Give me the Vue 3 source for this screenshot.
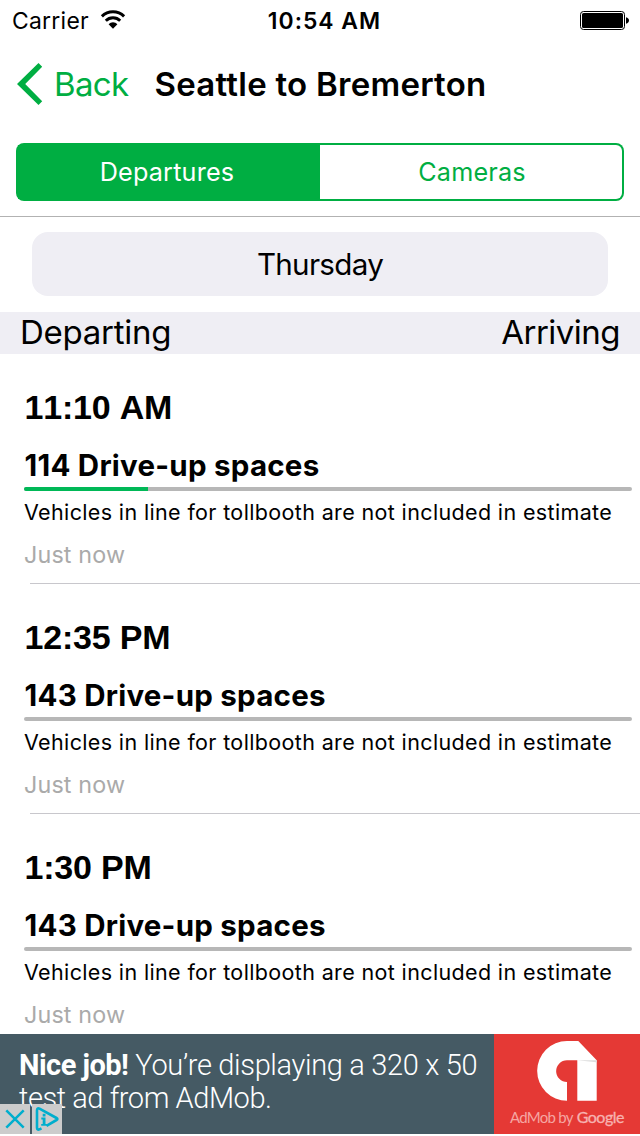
<script setup>
import { ref } from 'vue'

const tabs = ['Departures', 'Cameras']
const active = ref(0)

const sailings = [
  { time: '11:10 AM', spaces: 114, filled: 20.4 },
  { time: '12:35 PM', spaces: 143, filled: 0 },
  { time: '1:30 PM', spaces: 143, filled: 0 },
]
</script>

<template>
  <main class="screen">
    <header class="status">
      <div class="carrier">
        <span>Carrier</span>
        <svg class="wifi" viewBox="0 0 26 20" width="26" height="20">
          <path d="M1.900 6.400a15.800 15.800 0 0 1 22.200 0" fill="none" stroke="#000" stroke-width="3" />
          <path d="M5.800 10.700a10.200 10.200 0 0 1 14.400 0" fill="none" stroke="#000" stroke-width="2.900" />
          <path d="M8.600 14.200a6.200 6.200 0 0 1 8.800 0L13 18.700z" />
        </svg>
      </div>
      <span class="clock">10:54 AM</span>
      <svg class="battery" viewBox="0 0 50 20" width="50" height="20">
        <rect x="0.5" y="0.5" width="44" height="18" rx="3" fill="none" stroke="#000" />
        <rect x="2" y="2" width="41" height="15" rx="1.6" />
        <path d="M46 6.300c1.800.4 3 1.600 3 3.200s-1.200 2.800-3 3.200z" />
      </svg>
    </header>

    <nav class="bar">
      <a class="back">
        <svg viewBox="0 0 27 42" width="27" height="42">
          <path d="M22.500 0L26.200 3.800 9.200 21l17 17.200-3.700 3.800L1 21z" fill="#00ae42" />
        </svg>
        <span>Back</span>
      </a>
      <h1>Seattle to Bremerton</h1>
    </nav>

    <div class="segments">
      <button v-for="(tab, i) in tabs" :key="tab" :class="{ on: i === active }" @click="active = i">{{ tab }}</button>
    </div>

    <div class="day">Thursday</div>

    <div class="columns">
      <span class="departing">Departing</span>
      <span class="arriving">Arriving</span>
    </div>

    <ul class="list">
      <li v-for="s in sailings" :key="s.time">
        <div class="time">{{ s.time }}</div>
        <div class="spaces">{{ s.spaces }} Drive-up spaces</div>
        <div class="track"><div class="fill" :style="{ width: s.filled + '%' }"></div></div>
        <div class="note">Vehicles in line for tollbooth are not included in estimate</div>
        <div class="updated">Just now</div>
      </li>
    </ul>

    <aside class="ad">
      <div class="copy">
        <div class="line one"><b>Nice job!</b><span>You’re displaying a 320 x 50</span></div>
        <div class="line two">test ad from AdMob.</div>
      </div>
      <div class="brand">
        <svg viewBox="0 0 60 60" width="60" height="60">
          <path d="M30 0H41.300L59.700 19.300V59.700H40.300V19.300H30A10.850 10.850 0 0 0 30 41V59.700A29.850 29.850 0 0 1 30 0z" fill="#fff" />
          <path d="M40.300 19.300H59.700V21.600L57 21Z" fill="#ddd" />
        </svg>
        <div class="by"><span>AdMob by</span><b>Google</b></div>
      </div>
      <div class="choices">
        <svg viewBox="0 0 30 30" width="30" height="30">
          <path d="M6.300 6.300l17.400 17.400M23.700 6.300l-17.400 17.400" stroke="#00aecd" stroke-width="2.500" fill="none" />
        </svg>
        <svg viewBox="0 0 30 30" width="30" height="30">
          <path d="M9.500 24.300l-2 1q-2.500 1-2.500-1.500V6.500q0-3 2.500-1.800L24.500 14q1.800 1 0 2L14.500 21.800" stroke="#00aecd" stroke-width="2.600" fill="none" />
          <path d="M10.700 9.800h2.800v2.600h-2.800zM9.300 13.600h4.200v6.400h1.400v1.800H9.200v-1.800h1.500v-4.600H9.300z" fill="#00aecd" />
        </svg>
      </div>
    </aside>
  </main>
</template>

<style>
body {
  background: #fff;
}
</style>

<style scoped>
.screen {
  width: 640px;
  height: 1136px;
  overflow: hidden;
  background: #fff;
  color: #000;
  font-family: Inter, "Liberation Sans", sans-serif;
  white-space: nowrap;
}
.status {
  display: grid;
  grid-template-columns: 1fr auto 1fr;
  height: 40px;
  box-sizing: border-box;
  padding: 0 10px 0 12px;
  line-height: 42px;
  font-size: 22.9px;
}
.carrier {
  display: flex;
  letter-spacing: 0.27px;
}
.wifi {
  margin: 10px 0 0 11px;
}
.clock {
  padding-left: 7px;
  font-weight: 600;
  letter-spacing: 1px;
}
.battery {
  justify-self: end;
  margin-top: 11px;
}
.bar {
  display: flex;
  align-items: center;
  height: 88px;
  padding-left: 16px;
}
.back {
  display: flex;
  align-items: center;
  width: 138.5px;
  color: #00ae42;
  font-size: 33px;
  letter-spacing: -0.67px;
}
.back span {
  margin-left: 11px;
}
h1 {
  margin: 0;
  font-size: 33px;
  font-weight: 600;
  letter-spacing: 0.25px;
}
.segments {
  display: grid;
  grid-template-columns: 1fr 1fr;
  height: 54px;
  margin: 15px 16px;
  padding: 2px;
  border-radius: 8px;
  background: #00ae42;
}
.segments button {
  padding: 0 0 0 2px;
  border: 0;
  border-radius: 0 6px 6px 0;
  background: #fff;
  color: #00ae42;
  font: 400 25.2px/54px Inter, sans-serif;
  letter-spacing: 0.2px;
}
.segments .on {
  padding: 0 4px 0 0;
  background: #00ae42;
  color: #fff;
}
.day {
  position: relative;
  height: 64px;
  margin: 31px 32px 16px;
  border-radius: 16px;
  background: #efeef4;
  text-align: center;
  font-size: 29.6px;
  line-height: 65px;
  letter-spacing: -0.7px;
}
.day::before {
  content: "";
  position: absolute;
  left: -32px;
  right: -32px;
  top: -16px;
  height: 1px;
  background: #b2b2b2;
}
.columns {
  display: flex;
  justify-content: space-between;
  height: 42px;
  padding: 0 20px;
  background: #efeef4;
  font-size: 33px;
  line-height: 40px;
}
.departing {
  letter-spacing: -0.25px;
}
.arriving {
  letter-spacing: -0.53px;
}
.list {
  height: 680px;
  margin: 0;
  padding: 0;
  overflow: hidden;
  list-style: none;
}
li {
  position: relative;
  height: 197px;
  padding: 33px 8px 0 24px;
}
li::after {
  content: "";
  position: absolute;
  left: 30px;
  right: 0;
  bottom: 0;
  height: 1px;
  background: #c8c7cc;
}
.time {
  padding-left: 0.5px;
  font: 700 34px/40px "Liberation Sans", Arial, sans-serif;
  font-kerning: none;
  letter-spacing: -0.2px;
}
.spaces {
  margin-top: 18px;
  padding-left: 0.5px;
  font-size: 29.5px;
  font-weight: 700;
  line-height: 40px;
  letter-spacing: 0.24px;
}
.track {
  height: 4px;
  margin-top: 2px;
  border-radius: 2px;
  overflow: hidden;
  background: #b7b7b7;
}
.fill {
  height: 100%;
  background: #00b857;
}
.note {
  margin-top: 6px;
  font-size: 21.5px;
  line-height: 30px;
  letter-spacing: 0.36px;
}
.updated {
  margin-top: 13px;
  color: #aaa;
  font-size: 23.3px;
  line-height: 30px;
  letter-spacing: 0.16px;
}
.ad {
  position: relative;
  display: flex;
  height: 100px;
  background: #455a64;
  color: #fff;
}
.copy {
  flex: 1;
  padding: 15px 0 0 19px;
  font: 300 29px/33px Roboto, sans-serif;
}
.one {
  display: flex;
  gap: 7px;
  letter-spacing: -0.34px;
}
.one b {
  font-weight: 700;
  letter-spacing: -0.54px;
}
.two {
  letter-spacing: -0.44px;
}
.brand {
  display: flex;
  flex-direction: column;
  align-items: center;
  width: 146px;
  padding-top: 7px;
  box-sizing: border-box;
  background: #e53935;
}
.by {
  display: flex;
  gap: 4px;
  margin-top: 5px;
  color: #f5a5a2;
  font: 400 15px/22px Lato, sans-serif;
  letter-spacing: -0.75px;
}
.by b {
  color: #f7b2b0;
  font-size: 16px;
  font-weight: 400;
  letter-spacing: -0.5px;
  -webkit-text-stroke: 0.3px #f7b2b0;
}
.choices {
  position: absolute;
  left: 0;
  bottom: 0;
  display: flex;
  gap: 2px;
}
.choices svg {
  background: #ccc;
}
</style>
